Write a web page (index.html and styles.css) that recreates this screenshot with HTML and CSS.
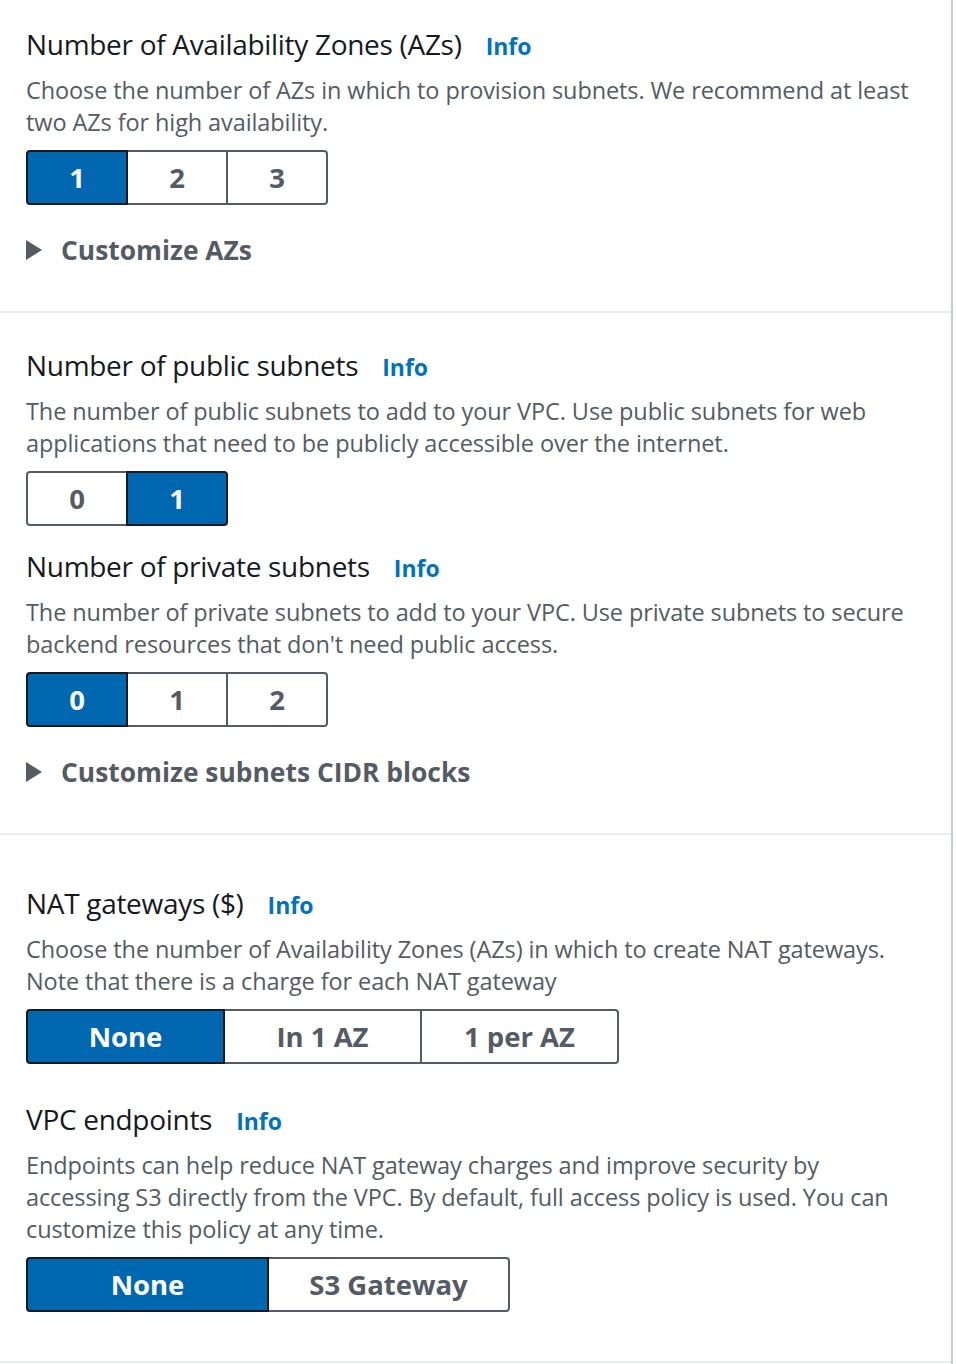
FILE: index.html
```html
<!DOCTYPE html>
<html>
<head>
<meta charset="utf-8">
<link rel="stylesheet" href="styles.css">
</head>
<body>
<div class="panel">
  <section class="sec sec-1">
    <div class="field">
      <h2 class="label">Number of Availability Zones (AZs)<span class="info">Info</span></h2>
      <p class="desc">Choose the number of AZs in which to provision subnets. We recommend at least two AZs for high availability.</p>
      <div class="seg seg-small">
        <span class="opt sel">1</span><span class="opt">2</span><span class="opt">3</span>
      </div>
    </div>
    <div class="expander"><span class="caret"></span>Customize AZs</div>
  </section>

  <section class="sec sec-2">
    <div class="field">
      <h2 class="label">Number of public subnets<span class="info">Info</span></h2>
      <p class="desc">The number of public subnets to add to your VPC. Use public subnets for web applications that need to be publicly accessible over the internet.</p>
      <div class="seg seg-small">
        <span class="opt">0</span><span class="opt sel">1</span>
      </div>
    </div>
    <div class="field field-next">
      <h2 class="label">Number of private subnets<span class="info">Info</span></h2>
      <p class="desc">The number of private subnets to add to your VPC. Use private subnets to secure backend resources that don't need public access.</p>
      <div class="seg seg-small">
        <span class="opt sel">0</span><span class="opt">1</span><span class="opt">2</span>
      </div>
    </div>
    <div class="expander"><span class="caret"></span>Customize subnets CIDR blocks</div>
  </section>

  <section class="sec sec-3">
    <div class="field">
      <h2 class="label">NAT gateways ($)<span class="info">Info</span></h2>
      <p class="desc">Choose the number of Availability Zones (AZs) in which to create NAT gateways. Note that there is a charge for each NAT gateway</p>
      <div class="seg seg-nat">
        <span class="opt sel">None</span><span class="opt">In 1 AZ</span><span class="opt">1 per AZ</span>
      </div>
    </div>
    <div class="field field-vpc">
      <h2 class="label">VPC endpoints<span class="info">Info</span></h2>
      <p class="desc">Endpoints can help reduce NAT gateway charges and improve security by accessing S3 directly from the VPC. By default, full access policy is used. You can customize this policy at any time.</p>
      <div class="seg seg-vpc">
        <span class="opt sel">None</span><span class="opt">S3 Gateway</span>
      </div>
    </div>
  </section>
</div>
</body>
</html>
```

FILE: styles.css
```css
html, body {
  margin: 0;
  padding: 0;
  background: #ffffff;
}

body {
  font-family: "Open Sans", "Noto Sans", "Liberation Sans", sans-serif;
  color: #16191f;
}

.panel {
  width: 951px;
  border-right: 2px solid #c5cbce;
  min-height: 1364px;
  box-sizing: content-box;
}

.sec {
  padding-left: 26px;
  padding-right: 26px;
  border-bottom: 2px solid #eaeded;
}

.sec-1 { padding-top: 26px; padding-bottom: 43px; }
.sec-2 { padding-top: 34px; padding-bottom: 43px; }
.sec-3 { padding-top: 50px; padding-bottom: 49px; }

.field {
  display: flex;
  flex-direction: column;
  align-items: flex-start;
}

.field-next { margin-top: 22px; }
.field-vpc { margin-top: 37px; }

.label {
  display: flex;
  align-items: baseline;
  margin: 0;
  height: 36px;
  font-size: 28px;
  line-height: 36px;
  font-weight: 400;
  color: #16191f;
  letter-spacing: -0.3px;
}

.info {
  margin-left: 24px;
  font-size: 23px;
  line-height: 36px;
  font-weight: 700;
  color: #0073bb;
  letter-spacing: 0;
}

.desc {
  margin: 12px 0 12px 0;
  font-size: 23.5px;
  line-height: 32px;
  color: #545b64;
  max-width: 900px;
  letter-spacing: -0.1px;
}

.seg {
  display: flex;
  height: 55px;
}

.opt {
  display: flex;
  align-items: center;
  justify-content: center;
  box-sizing: border-box;
  height: 100%;
  border: 2px solid #545b64;
  margin-left: -2px;
  background: #ffffff;
  color: #545b64;
  font-size: 27.5px;
  font-weight: 700;
  position: relative;
}

.opt:first-child {
  margin-left: 0;
  border-radius: 4px 0 0 4px;
}

.opt:last-child {
  border-radius: 0 4px 4px 0;
}

.opt.sel {
  background: #0067b0;
  border-color: #16191f;
  color: #ffffff;
  z-index: 1;
}

.seg-small .opt { width: 102px; }
.seg-nat .opt { width: 199px; }
.seg-vpc .opt { width: 243px; }

.expander {
  display: flex;
  align-items: center;
  margin-top: 27px;
  height: 36px;
  font-size: 26.4px;
  line-height: 36px;
  font-weight: 700;
  color: #545b64;
}

.caret {
  width: 0;
  height: 0;
  border-top: 10px solid transparent;
  border-bottom: 10px solid transparent;
  border-left: 16px solid #545b64;
  margin-right: 19px;
}
```
